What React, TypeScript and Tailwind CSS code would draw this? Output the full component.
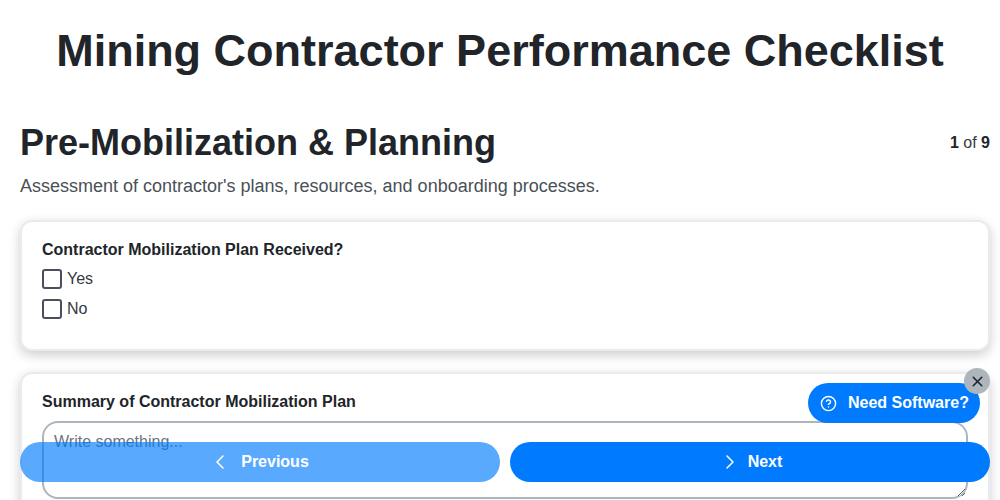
import React from 'react';
import { ChevronLeft, ChevronRight, CircleHelp, X } from 'lucide-react';

const cardClass =
  'rounded-xl border-2 border-[#e9ecef] bg-white pt-[18px] pb-[20px] pl-5 pr-5 shadow-[0_4px_12px_rgba(0,0,0,0.2)]';

const CheckRow = ({ label }: { label: string }) => (
  <label className="flex h-[30px] items-center gap-[5px] text-base text-[#343a40]">
    <input type="checkbox" className="h-5 w-5 appearance-none rounded-[3px] border-2 border-[#4a4e5e] bg-white" />
    {label}
  </label>
);

export default function App() {
  return (
    <div className="h-screen overflow-hidden bg-white pl-5 pr-[10px] font-['Liberation_Sans',Arial,sans-serif] text-[#212529]">
      <h1 className="pt-[22px] pr-[10px] text-center text-[45px] leading-[58px] font-bold">
        Mining Contractor Performance Checklist
      </h1>

      <div className="mt-[41px] flex items-start justify-between">
        <h2 className="text-4xl leading-[43px] font-bold">Pre-Mobilization &amp; Planning</h2>
        <div className="pt-[10px] text-base leading-[24px] text-[#343a40]">
          <b className="text-[#212529]">1</b> of <b className="text-[#212529]">9</b>
        </div>
      </div>
      <p className="mt-[11px] text-lg leading-[22px] text-[#495057]">
        Assessment of contractor's plans, resources, and onboarding processes.
      </p>

      <div className={`mt-[23px] h-[131px] ${cardClass}`}>
        <div className="mb-[5px] text-base leading-[19px] font-bold">Contractor Mobilization Plan Received?</div>
        <CheckRow label="Yes" />
        <CheckRow label="No" />
      </div>

      <div className={`mt-[21px] ${cardClass}`}>
        <div className="mb-[10px] text-base leading-[19px] font-bold">Summary of Contractor Mobilization Plan</div>
        <textarea
          placeholder="Write something..."
          className="block h-[78px] w-full rounded-2xl border-2 border-[#adb5bd] bg-white px-[10px] py-[7px] text-base text-[#212529] outline-none placeholder:text-[#6c757d]"
        />
      </div>

      <div className="fixed bottom-[18px] left-5 right-[10px] flex gap-[10px]">
        <button className="flex h-10 flex-1 items-center justify-center gap-[6px] rounded-[20px] bg-[#007bff] text-base font-bold text-white opacity-65">
          <ChevronLeft size={24} strokeWidth={1.5} className="-ml-[3px] mr-[3px]" />
          Previous
        </button>
        <button className="flex h-10 flex-1 items-center justify-center gap-[6px] rounded-[20px] bg-[#007bff] text-base font-bold text-white">
          <ChevronRight size={24} strokeWidth={1.5} />
          Next
        </button>
      </div>

      <button className="fixed top-[383px] right-5 flex h-10 w-[172px] items-center gap-[11px] rounded-[20px] bg-[#007bff] pl-[12px] text-base font-bold text-white">
        <CircleHelp size={17} strokeWidth={2} />
        Need Software?
      </button>
      <button className="fixed top-[368px] right-[10px] flex h-[26px] w-[26px] items-center justify-center rounded-full bg-[#adb5bd] text-[#212529]">
        <X size={17} strokeWidth={2.25} />
      </button>
    </div>
  );
}
